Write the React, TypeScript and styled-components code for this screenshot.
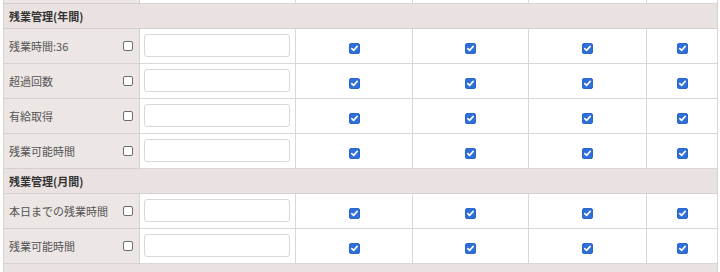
import React from 'react';
import styled, { createGlobalStyle } from 'styled-components';

const GlobalStyle = createGlobalStyle`
  html, body {
    margin: 0;
    padding: 0;
    background: #ffffff;
  }
  body {
    font-family: "Noto Sans CJK JP", "Noto Sans", sans-serif;
  }
`;

const Viewport = styled.div`
  width: 720px;
  height: 272px;
  overflow: hidden;
  padding-left: 3px;
  box-sizing: border-box;
`;

const Table = styled.table`
  margin-top: -31px;
  table-layout: fixed;
  border-collapse: separate;
  border-spacing: 0;
  border-left: 1px solid #d9d3d1;
  width: 714px;
`;

const Cell = styled.td`
  padding: 0;
  height: 35px;
  box-sizing: border-box;
  border-right: 1px solid #dcd7d5;
  border-bottom: 1px solid #dcd7d5;
  background: #ffffff;
  vertical-align: middle;
`;

const LabelCell = styled(Cell)`
  background: #ece6e4;
  border-right-color: #d6d0ce;
  border-bottom-color: #d6d0ce;
`;

const LabelInner = styled.div`
  display: flex;
  align-items: center;
  justify-content: space-between;
  padding: 0 6px 0 5px;
  font-size: 11px;
  color: #555555;
`;

const InputCell = styled(Cell)`
  padding: 0 5px 1px 4px;
`;

const TextBox = styled.input`
  display: block;
  width: 100%;
  height: 23px;
  box-sizing: border-box;
  border: 1px solid #d8d8d8;
  border-radius: 3px;
  background: #ffffff;
  outline: none;
`;

const CheckCell = styled(Cell)`
  text-align: center;
`;

const SectionCell = styled.td<{ $h: number }>`
  padding: 0 0 0 5px;
  height: ${(p) => p.$h}px;
  box-sizing: border-box;
  background: #e9e2e0;
  border-right: 1px solid #d6d0ce;
  border-bottom: 1px solid #d6d0ce;
  font-size: 11px;
  font-weight: bold;
  color: #333333;
  vertical-align: middle;
`;

const Box = styled.span<{ $checked?: boolean }>`
  display: inline-flex;
  align-items: center;
  justify-content: center;
  width: ${(p) => (p.$checked ? 11 : 10)}px;
  height: ${(p) => (p.$checked ? 11 : 10)}px;
  box-sizing: border-box;
  border-radius: 2px;
  vertical-align: middle;
  background: ${(p) => (p.$checked ? '#2f6fd9' : '#ffffff')};
  border: 1px solid ${(p) => (p.$checked ? '#2a66cc' : '#6e6e6e')};
`;

const Check = ({ checked }: { checked?: boolean }) => (
  <Box $checked={checked}>
    {checked && (
      <svg width="9" height="9" viewBox="0 0 9 9">
        <path d="M1.8 4.6 L3.6 6.4 L7.2 2.4" fill="none" stroke="#ffffff" strokeWidth="1.6" strokeLinecap="round" strokeLinejoin="round" />
      </svg>
    )}
  </Box>
);

interface Section {
  title: string;
  rows: string[];
}

const sections: Section[] = [
  { title: '残業管理(年間)', rows: ['残業時間:36', '超過回数', '有給取得', '残業可能時間'] },
  { title: '残業管理(月間)', rows: ['本日までの残業時間', '残業可能時間'] },
];

const widths = [136, 156, 117, 116, 118, 71];

const Row = ({ label }: { label: string }) => (
  <tr>
    <LabelCell>
      <LabelInner>
        <span>{label}</span>
        <Check />
      </LabelInner>
    </LabelCell>
    <InputCell>
      <TextBox type="text" />
    </InputCell>
    {[0, 1, 2, 3].map((i) => (
      <CheckCell key={i}>
        <Check checked />
      </CheckCell>
    ))}
  </tr>
);

const App = () => {
  return (
    <Viewport>
      <GlobalStyle />
      <Table>
        <colgroup>
          {widths.map((w, i) => (
            <col key={i} style={{ width: w }} />
          ))}
        </colgroup>
        <tbody>
          <tr>
            <LabelCell />
            <Cell />
            <Cell />
            <Cell />
            <Cell />
            <Cell />
          </tr>
          {sections.map((s) => (
            <React.Fragment key={s.title}>
              <tr>
                <SectionCell colSpan={6} $h={25}>{s.title}</SectionCell>
              </tr>
              {s.rows.map((r) => (
                <Row key={r} label={r} />
              ))}
            </React.Fragment>
          ))}
          <tr>
            <SectionCell colSpan={6} $h={25} />
          </tr>
        </tbody>
      </Table>
    </Viewport>
  );
};

export default App;
